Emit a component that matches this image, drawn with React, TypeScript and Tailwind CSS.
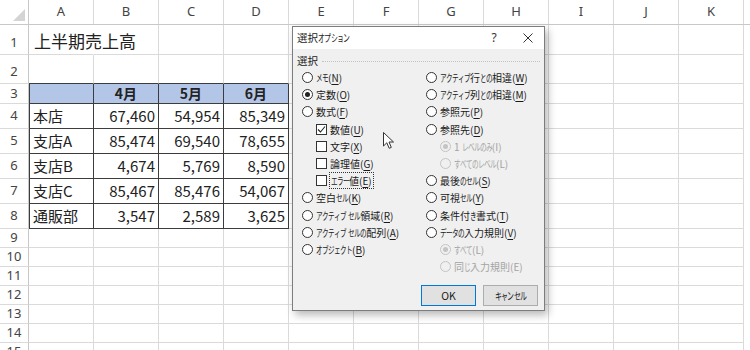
import React from "react";

const COLS = ["A", "B", "C", "D", "E", "F", "G", "H", "I", "J", "K"];
const ROW_H = [30, 29, 20, 25, 25, 25, 25, 25, 19, 19, 19, 19, 19, 19, 19];

const DATA: Record<number, [string, string, string, string]> = {
  4: ["本店", "67,460", "54,954", "85,349"],
  5: ["支店A", "85,474", "69,540", "78,655"],
  6: ["支店B", "4,674", "5,769", "8,590"],
  7: ["支店C", "85,467", "85,476", "54,067"],
  8: ["通販部", "3,547", "2,589", "3,625"],
};

// the dialog's UI font has narrow kana: condense each kana glyph
function K({ children }: { children: string }) {
  return (
    <>
      {Array.from(children).map((ch, i) =>
        /[\u3040-\u30ff]/.test(ch) ? (
          <span key={i} className="inline-block w-[0.6em] origin-left scale-x-[0.66]">
            {ch}
          </span>
        ) : (
          <React.Fragment key={i}>{ch}</React.Fragment>
        )
      )}
    </>
  );
}

function Cell({ row, col }: { row: number; col: number }) {
  const inTable = row >= 3 && row <= 8 && col <= 3;
  let cls = "h-full w-[65px] shrink-0 flex border-r border-b border-[#dadada]";
  if (inTable) cls += " border-r-[#3c3c3c] border-b-[#3c3c3c]";
  if (row === 2 && col <= 3) cls += " border-b-[#3c3c3c]";
  if (inTable && col === 0) cls += " shadow-[inset_1px_0_0_#3c3c3c]";
  if (row === 3 && col <= 3) cls += " bg-[#b4c6e7]";
  if (row === 1 && col === 0) cls += " border-r-transparent";

  let content: React.ReactNode = null;
  if (row === 1 && col === 0) {
    cls += " items-end pl-[5px] pb-[1px] overflow-visible";
    content = <span className="whitespace-nowrap text-[17px] leading-[24px] text-[#222]">上半期売上高</span>;
  } else if (row === 3 && col >= 1 && col <= 3) {
    cls += " items-center justify-center";
    content = <span className="text-[14px] font-bold text-[#222]">{["4月", "5月", "6月"][col - 1]}</span>;
  } else if (DATA[row] && col <= 3) {
    const v = DATA[row][col];
    if (col === 0) {
      cls += " items-center pl-[4px]";
    } else {
      cls += " items-center justify-end pr-[3px]";
    }
    content = <span className="whitespace-nowrap text-[15px] text-[#222]">{v}</span>;
  }
  return <div className={cls}>{content}</div>;
}

function Radio({ checked, disabled }: { checked?: boolean; disabled?: boolean }) {
  return (
    <span
      className={
        "flex h-[11px] w-[11px] shrink-0 items-center justify-center rounded-full border " +
        (disabled ? "border-[#c4c4c4] bg-[#f0f0f0]" : "border-[#333] bg-white")
      }
    >
      {checked && (
        <span className={"h-[5px] w-[5px] rounded-full " + (disabled ? "bg-[#c4c4c4]" : "bg-[#222]")} />
      )}
    </span>
  );
}

function Check({ checked }: { checked?: boolean }) {
  return (
    <span className="flex h-[11px] w-[11px] shrink-0 items-center justify-center border border-[#333] bg-white">
      {checked && (
        <svg width="9" height="9" viewBox="0 0 9 9">
          <polyline points="1,4.5 3.5,7 8,1.5" fill="none" stroke="#222" strokeWidth="1.1" />
        </svg>
      )}
    </span>
  );
}

type Opt = {
  t: string;
  k: string;
  kind: "radio" | "check";
  checked?: boolean;
  disabled?: boolean;
  indent?: boolean;
  focus?: boolean;
};

const LEFT: Opt[] = [
  { t: "メモ", k: "N", kind: "radio" },
  { t: "定数", k: "O", kind: "radio", checked: true },
  { t: "数式", k: "F", kind: "radio" },
  { t: "数値", k: "U", kind: "check", checked: true, indent: true },
  { t: "文字", k: "X", kind: "check", indent: true },
  { t: "論理値", k: "G", kind: "check", indent: true },
  { t: "エラー値", k: "E", kind: "check", indent: true, focus: true },
  { t: "空白セル", k: "K", kind: "radio" },
  { t: "アクティブ セル領域", k: "R", kind: "radio" },
  { t: "アクティブ セルの配列", k: "A", kind: "radio" },
  { t: "オブジェクト", k: "B", kind: "radio" },
];

const RIGHT: Opt[] = [
  { t: "アクティブ行との相違", k: "W", kind: "radio" },
  { t: "アクティブ列との相違", k: "M", kind: "radio" },
  { t: "参照元", k: "P", kind: "radio" },
  { t: "参照先", k: "D", kind: "radio" },
  { t: "1 レベルのみ", k: "I", kind: "radio", disabled: true, checked: true, indent: true },
  { t: "すべてのレベル", k: "L", kind: "radio", disabled: true, indent: true },
  { t: "最後のセル", k: "S", kind: "radio" },
  { t: "可視セル", k: "Y", kind: "radio" },
  { t: "条件付き書式", k: "T", kind: "radio" },
  { t: "データの入力規則", k: "V", kind: "radio" },
  { t: "すべて", k: "L", kind: "radio", disabled: true, checked: true, indent: true },
  { t: "同じ入力規則", k: "E", kind: "radio", disabled: true, indent: true },
];

function Option({ o }: { o: Opt }) {
  return (
    <div className={"flex h-[17.2px] items-center gap-[3px] " + (o.indent ? "pl-[14px]" : "")}>
      {o.kind === "radio" ? <Radio checked={o.checked} disabled={o.disabled} /> : <Check checked={o.checked} />}
      <span
        className={
          "whitespace-pre " +
          (o.disabled ? "text-[#a3a3a3]" : "text-[#1a1a1a]") +
          (o.focus ? " px-[1px] outline outline-1 outline-dotted outline-[#333]" : "")
        }
      >
        <K>{o.t}</K>(
        {o.disabled ? o.k : <span className="underline underline-offset-[2px]">{o.k}</span>})
      </span>
    </div>
  );
}

function Dialog() {
  return (
    <div className="absolute left-[292px] top-[26px] flex h-[285px] w-[253px] flex-col border border-[#7d7d7d] bg-[#f0f0f0] font-['Noto_Sans_CJK_JP',sans-serif] text-[10px] shadow-[3px_4px_8px_rgba(0,0,0,0.28)]">
      <div className="flex h-[22px] shrink-0 items-center bg-white pl-[4px]">
        <span className="flex-1 text-[10.5px] text-[#1a1a1a]">
          <K>選択オプション</K>
        </span>
        <span className="flex w-[30px] justify-center font-['Noto_Sans',sans-serif] text-[12px] text-[#333]">?</span>
        <span className="ml-[4px] mr-[1px] flex w-[30px] justify-center">
          <svg width="10" height="10" viewBox="0 0 10 10">
            <path d="M0.5 0.5 L9.5 9.5 M9.5 0.5 L0.5 9.5" stroke="#333" strokeWidth="1" />
          </svg>
        </span>
      </div>
      <div className="flex flex-1 flex-col px-[4px] pt-[4px]">
        <div className="flex h-[16px] items-center gap-[4px]">
          <span className="text-[10.5px] text-[#1a1a1a]">選択</span>
          <span className="mt-[1px] flex-1 border-t border-dotted border-[#c2c2c2]" />
        </div>
        <div className="flex pl-[5px]">
          <div className="w-[124px] shrink-0">
            {LEFT.map((o, i) => (
              <Option key={i} o={o} />
            ))}
          </div>
          <div className="flex-1">
            {RIGHT.map((o, i) => (
              <Option key={i} o={o} />
            ))}
          </div>
        </div>
        <div className="mt-auto flex justify-end gap-[7px] pb-[4px] pr-[2px]">
          <button className="flex h-[21px] w-[55px] items-center justify-center border border-[#0078d7] bg-[#e1e1e1] text-[10.5px] text-[#1a1a1a]">
            OK
          </button>
          <button className="flex h-[21px] w-[55px] items-center justify-center border border-[#adadad] bg-[#e1e1e1] text-[10.5px] text-[#1a1a1a]">
            <K>キャンセル</K>
          </button>
        </div>
      </div>
    </div>
  );
}

export default function App() {
  return (
    <div className="relative h-[350px] w-[750px] overflow-hidden bg-white font-['Noto_Sans_CJK_JP','Noto_Sans',sans-serif]">
      {/* column header */}
      <div className="flex h-[25px] border-b border-[#c8c8c8]">
        <div className="relative h-full w-[29px] shrink-0 border-r border-[#c8c8c8]">
          <svg className="absolute bottom-[3px] right-[3px]" width="12" height="12" viewBox="0 0 12 12">
            <polygon points="12,0 12,12 0,12" fill="#d4d4d4" />
          </svg>
        </div>
        {COLS.map((c) => (
          <div
            key={c}
            className="flex h-full w-[65px] shrink-0 items-center justify-center border-r border-[#dadada] font-['Noto_Sans',sans-serif] text-[13px] text-[#444]"
          >
            {c}
          </div>
        ))}
      </div>
      {ROW_H.map((h, i) => {
        const row = i + 1;
        return (
          <div key={row} className="flex" style={{ height: h }}>
            <div
              className={
                "flex h-full w-[29px] shrink-0 justify-center border-r border-b border-r-[#c8c8c8] border-b-[#dadada] font-['Noto_Sans',sans-serif] text-[13px] text-[#444] " +
                (row <= 2 ? "items-end pb-[2px]" : "items-center")
              }
            >
              {row}
            </div>
            {COLS.map((c, ci) => (
              <Cell key={c} row={row} col={ci} />
            ))}
          </div>
        );
      })}
      <Dialog />
      {/* mouse pointer */}
      <svg className="absolute left-[383px] top-[132px]" width="12" height="18" viewBox="0 0 12 18">
        <path
          d="M0.5 0.5 L0.5 14 L3.8 10.8 L6.2 16.3 L8.3 15.4 L6 10 L10.5 10 Z"
          fill="#fff"
          stroke="#333"
          strokeWidth="1"
          strokeLinejoin="round"
        />
      </svg>
    </div>
  );
}
